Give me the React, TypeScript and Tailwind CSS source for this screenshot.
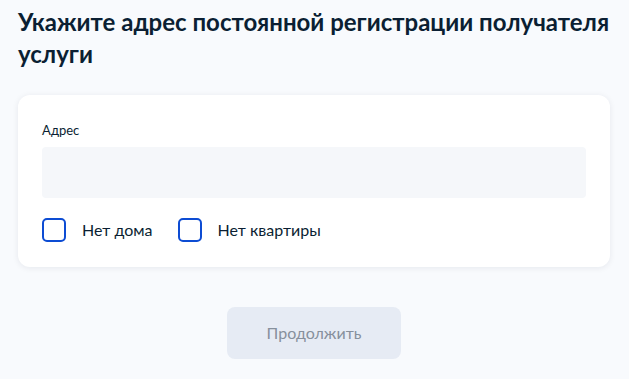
import React from 'react';

function Checkbox({ label }: { label: string }) {
  return (
    <label className="flex items-center gap-4 cursor-pointer">
      <span className="w-6 h-6 rounded-[5px] border-2 border-[#0d4cd3] bg-white" />
      <span className="text-[16px] text-[#0b1f33]">{label}</span>
    </label>
  );
}

export default function App() {
  return (
    <div className="min-h-screen bg-[#f8fafd] px-[18px] pt-[6px] font-['Lato','Noto_Sans',sans-serif]">
      <h1 className="text-[24px] leading-[32px] font-bold text-[#0b1f33]">
        Укажите адрес постоянной регистрации получателя услуги
      </h1>

      <div className="mt-[25px] w-[592px] bg-white rounded-xl shadow-[0_1px_6px_rgba(11,31,51,0.08)] px-6 pt-[27px] pb-[25px]">
        <div className="text-[13px] leading-4 text-[#0b1f33]">Адрес</div>
        <div className="mt-[9px] h-[51px] rounded-[4px] bg-[#f5f7fa]" />
        <div className="mt-[20px] flex items-center gap-[25px]">
          <Checkbox label="Нет дома" />
          <Checkbox label="Нет квартиры" />
        </div>
      </div>

      <div className="w-[592px] flex justify-center mt-[40px]">
        <button className="w-[174px] h-[52px] rounded-lg bg-[#e6ebf4] text-[16px] text-[#86909c]">
          Продолжить
        </button>
      </div>
    </div>
  );
}
